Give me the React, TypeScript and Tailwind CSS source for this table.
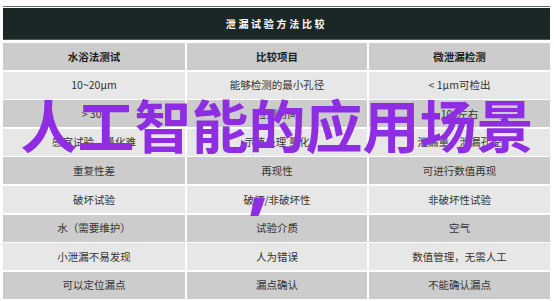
import React from "react";

const rows: [string, string, string][] = [
  ["10~20μm", "能够检测的最小孔径", "< 1μm可检出"],
  ["> 30s", "检测时间", "10s左右"],
  ["感官试验、量化难", "示值处理 量化", "泄漏量、泄漏孔径"],
  ["重复性差", "再现性", "可进行数值再现"],
  ["破坏试验", "破坏/非破坏性", "非破坏性试验"],
  ["水（需要维护）", "试验介质", "空气"],
  ["小泄漏不易发现", "人为错误", "数值管理，无需人工"],
  ["可以定位漏点", "漏点确认", "不能确认漏点"],
];

const font = { fontFamily: '"Noto Sans CJK SC", "Noto Sans", sans-serif' };

function Row({ cells, bold, grey }: { cells: [string, string, string]; bold?: boolean; grey: boolean }) {
  return (
    <div className="grid grid-cols-[182px_180px_181px] gap-x-[2px] h-[27px]">
      {cells.map((c, i) => (
        <div
          key={i}
          className={
            "flex items-center justify-center whitespace-nowrap text-[10.5px] " +
            (grey ? "bg-[#cbcccb] " : "bg-[#e6e7e6] ") +
            (bold ? "font-bold text-[#1e1e1e]" : "text-[#333333]")
          }
        >
          {c}
        </div>
      ))}
    </div>
  );
}

export default function App() {
  return (
    <div className="relative w-[554px] h-[301px] bg-white overflow-hidden" style={font}>
      <div className="pl-[3px] pr-[4px] pt-[6px]">
        <div className="h-px bg-[#5f6767]" />
        <div className="mt-px h-[32px] bg-[#1b2727] border-b border-[#4b5757] flex items-center justify-center">
          <span className="text-white font-bold text-[10px] tracking-[2.7px]">泄漏试验方法比较</span>
        </div>
        <div className="mt-[3px] flex flex-col gap-[1.6px]">
          <Row cells={["水浴法测试", "比较项目", "微泄漏检测"]} bold grey />
          {rows.map((r, i) => (
            <Row key={i} cells={r} grey={i % 2 === 1} />
          ))}
        </div>
      </div>
      <div
        className="absolute left-0 top-[95px] w-[554px] text-center font-bold text-[57px] leading-[57px] text-[#8e2de2] whitespace-nowrap"
        style={font}
      >
        人工智能的应用场景
      </div>
      <span
        className="absolute left-[248px] top-[140px] font-bold text-[75px] leading-[75px] text-[#8e2de2]"
        style={{ fontFamily: '"Noto Sans", sans-serif' }}
      >
        ,
      </span>
    </div>
  );
}
